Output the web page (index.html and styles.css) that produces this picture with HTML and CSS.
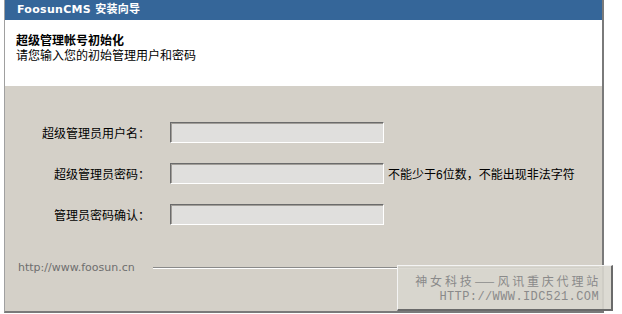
FILE: index.html
```html
<html>
  <head>
    <title>FoosunCMS 安装向导</title>
    <link rel="stylesheet" href="styles.css">
  </head>
  <body>
    <div class="panel">
      <div class="head">FoosunCMS 安装向导</div>
      <div class="intro">
        <div class="intro-title">超级管理帐号初始化</div>
        <div class="intro-text">请您输入您的初始管理用户和密码</div>
      </div>
      <div class="form">
        <div class="row">
          <label class="label">超级管理员用户名：</label>
          <input class="field" type="text">
        </div>
        <div class="row">
          <label class="label">超级管理员密码：</label>
          <input class="field" type="password">
          <span class="hint">不能少于6位数，不能出现非法字符</span>
        </div>
        <div class="row">
          <label class="label">管理员密码确认：</label>
          <input class="field" type="password">
        </div>
        <div class="foot">
          <span class="site">http://www.foosun.cn</span>
          <span class="rule"></span>
        </div>
      </div>
    </div>
    <div class="stamp">
      <div class="stamp-cn">神女科技——风讯重庆代理站</div>
      <div class="stamp-en">HTTP://WWW.IDC521.COM</div>
    </div>
  </body>
</html>
```
FILE: styles.css
```css
body {
  margin: 0;
  background: #fff;
  font-family: "Liberation Sans", "Noto Sans CJK SC", sans-serif;
  font-size: 12px;
  color: #000;
}

.panel {
  margin-left: 4px;
  width: 597px;
  border-left: 1px solid #a0a0a0;
  border-right: 2px solid #7a7a7a;
  border-bottom: 2px solid #7a7a7a;
}

.head {
  height: 20px;
  line-height: 20px;
  padding-left: 12px;
  background: #356699;
  color: #fff;
  font-family: "DejaVu Sans", "Noto Sans CJK SC", sans-serif;
  font-weight: bold;
  font-size: 11px;
  letter-spacing: 0.3px;
}

.intro {
  height: 66px;
  box-sizing: border-box;
  padding: 14px 11px 0;
  background: #fff;
  line-height: 15px;
}

.intro-title {
  font-weight: bold;
}

.form {
  background: #d4d0c8;
  padding-top: 36px;
  height: 225px;
  box-sizing: border-box;
}

.row {
  display: flex;
  align-items: center;
  height: 21px;
  margin-bottom: 20px;
}

.label {
  width: 145px;
  text-align: right;
}

.field {
  width: 214px;
  height: 21px;
  box-sizing: border-box;
  margin: 0 4px 0 20px;
  padding: 0;
  background: #e0dfdd;
  border: 1px solid;
  border-color: #6b6b6b #fff #fff #6b6b6b;
  box-shadow: inset 1px 1px 0 #a09d98;
}

.hint {
  white-space: nowrap;
}

.foot {
  display: flex;
  align-items: center;
  margin-top: 36px;
  padding-left: 13px;
}

.site {
  color: #6e6e6e;
  font-family: "DejaVu Sans", sans-serif;
  font-size: 11px;
}

.rule {
  flex: 1;
  margin: 0 3px 0 18px;
  border-top: 1px solid #8a8a8a;
  border-bottom: 1px solid #fff;
}

.stamp {
  position: absolute;
  left: 397px;
  top: 265px;
  width: 216px;
  height: 46px;
  box-sizing: border-box;
  padding: 7px 12px 0 0;
  text-align: right;
  background: rgba(216, 214, 206, 0.9);
  border-top: 1px solid #f4f4f4;
  border-left: 1px solid #f4f4f4;
  border-right: 2px solid #6a6a6a;
  border-bottom: 2px solid #6a6a6a;
  color: #8a8a8a;
}

.stamp-cn {
  font-family: "Noto Sans CJK SC", sans-serif;
  font-size: 12px;
  letter-spacing: 2.8px;
  line-height: 16px;
  margin-right: -2px;
}

.stamp-en {
  font-family: "Liberation Mono", monospace;
  font-size: 12px;
  line-height: 16px;
  letter-spacing: 0.4px;
}
```
